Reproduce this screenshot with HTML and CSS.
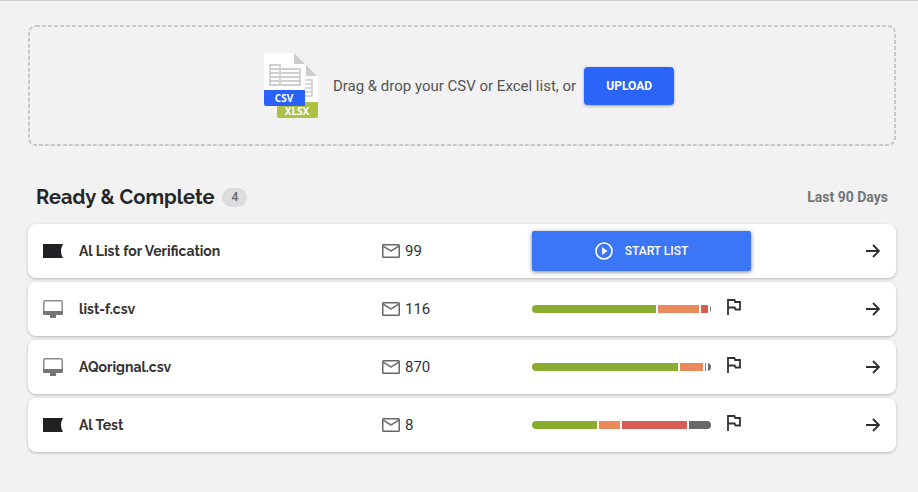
FILE: index.html
```html
<!DOCTYPE html>
<html lang="en">
<head>
<meta charset="UTF-8">
<meta name="viewport" content="width=device-width, initial-scale=1.0">
<title>Lists</title>
<link rel="stylesheet" href="styles.css">
</head>
<body>
<svg width="0" height="0" class="sprite" aria-hidden="true">
<symbol id="banner" viewBox="0 0 20 14"><path d="M0 0h20q-4 7 0 14H0z" fill="#202124"/></symbol>
<symbol id="monitor" viewBox="0 0 20 18">
<rect x="0.75" y="0.75" width="18.5" height="13.5" rx="1.5" fill="#fff" stroke="#8c8c8c" stroke-width="1.5"/>
<path d="M0 11h20v2.500a1.500 1.500 0 0 1-1.500 1.500h-17a1.500 1.500 0 0 1-1.500-1.500zM7 15h6v3H7z" fill="#757575"/>
</symbol>
<symbol id="mail" viewBox="0 0 18 14">
<rect x="0.75" y="0.75" width="16.5" height="12.500" rx="0.8" fill="none" stroke="#666" stroke-width="1.5"/>
<path d="M1 2l8 5 8-5" fill="none" stroke="#777" stroke-width="1.5"/>
</symbol>
<symbol id="flag" viewBox="0 0 14 16"><path d="M1 16V1h6.500l.6 2H13v7.500H8.500l-.8-2H1" fill="none" stroke="#333" stroke-width="1.800"/></symbol>
<symbol id="arrow" viewBox="0 0 14 14"><path d="M0 7h12.500M7 1l6 6-6 6" fill="none" stroke="#303030" stroke-width="1.900"/></symbol>
</svg>

<main class="page">
<section class="dropzone">
<svg class="outline" aria-hidden="true"><rect x="1" y="1" rx="7"/></svg>
<svg class="files" width="54" height="66" viewBox="0 0 54 66" aria-hidden="true">
<path d="M13 12h29l12 12v30H13z" fill="#fff"/>
<path d="M42 12v11h11z" fill="#ccc"/>
<path d="M41 27h7v16h-7M41 31h7M41 35h7M41 39h7" fill="none" stroke="#ccc" stroke-width="1.500"/>
<path d="M2 0h28l11 11v27H0V2a2 2 0 0 1 2-2z" fill="#fff"/>
<path d="M30 0v11h11z" fill="#ccc"/>
<path d="M6 12h10v20H6zM16 16h20v16H16M6 16h10M6 20h30M6 24h30M6 28h30" fill="none" stroke="#cfcfcf" stroke-width="1.800"/>
<path d="M13 49h41v14a2 2 0 0 1-2 2H15a2 2 0 0 1-2-2z" fill="#adc145"/>
<text class="file-type" x="33" y="62" text-anchor="middle">XLSX</text>
<path d="M0 37h41v16H2a2 2 0 0 1-2-2z" fill="#2962f8"/>
<text class="file-type" x="20" y="49" text-anchor="middle">CSV</text>
</svg>
<p class="drop-text">Drag &amp; drop your CSV or Excel list, or</p>
<button class="btn upload-btn">UPLOAD</button>
</section>

<div class="header">
<h1 class="title">Ready &amp; Complete</h1>
<span class="count">4</span>
<span class="period">Last 90 Days</span>
</div>

<ul class="lists">
<li class="list-row">
<svg width="20" height="14"><use href="#banner"/></svg>
<span class="name">Al List for Verification</span>
<span class="emails"><svg width="18" height="14"><use href="#mail"/></svg>99</span>
<div class="status">
<button class="btn start-btn">
<svg width="18" height="18" viewBox="0 0 18 18" aria-hidden="true">
<circle cx="9" cy="9" r="8" fill="none" stroke="#fff" stroke-width="1.600"/>
<path d="M7 5l5.500 4L7 13z" fill="#fff"/>
</svg>
START LIST
</button>
</div>
<a class="open" href="#" aria-label="Open Al List for Verification"><svg width="14" height="14"><use href="#arrow"/></svg></a>
</li>
<li class="list-row">
<svg width="20" height="18"><use href="#monitor"/></svg>
<span class="name">list-f.csv</span>
<span class="emails"><svg width="18" height="14"><use href="#mail"/></svg>116</span>
<div class="status">
<div class="bar">
<span class="good" style="flex-grow: 124"></span>
<span class="risky" style="flex-grow: 41"></span>
<span class="bad" style="flex-grow: 7"></span>
<span class="unknown" style="flex-grow: 1"></span>
</div>
<svg class="flag" width="14" height="16"><use href="#flag"/></svg>
</div>
<a class="open" href="#" aria-label="Open list-f.csv"><svg width="14" height="14"><use href="#arrow"/></svg></a>
</li>
<li class="list-row">
<svg width="20" height="18"><use href="#monitor"/></svg>
<span class="name">AQorignal.csv</span>
<span class="emails"><svg width="18" height="14"><use href="#mail"/></svg>870</span>
<div class="status">
<div class="bar">
<span class="good" style="flex-grow: 146"></span>
<span class="risky" style="flex-grow: 23"></span>
<span class="bad" style="flex-grow: 1"></span>
<span class="unknown" style="flex-grow: 3"></span>
</div>
<svg class="flag" width="14" height="16"><use href="#flag"/></svg>
</div>
<a class="open" href="#" aria-label="Open AQorignal.csv"><svg width="14" height="14"><use href="#arrow"/></svg></a>
</li>
<li class="list-row">
<svg width="20" height="14"><use href="#banner"/></svg>
<span class="name">Al Test</span>
<span class="emails"><svg width="18" height="14"><use href="#mail"/></svg>8</span>
<div class="status">
<div class="bar">
<span class="good" style="flex-grow: 65"></span>
<span class="risky" style="flex-grow: 21"></span>
<span class="bad" style="flex-grow: 65"></span>
<span class="unknown" style="flex-grow: 22"></span>
</div>
<svg class="flag" width="14" height="16"><use href="#flag"/></svg>
</div>
<a class="open" href="#" aria-label="Open Al Test"><svg width="14" height="14"><use href="#arrow"/></svg></a>
</li>
</ul>
</main>
</body>
</html>
```

FILE: styles.css
```css
* {
    box-sizing: border-box;
}

body {
    font-family: Roboto, sans-serif;
    margin: 0;
    background-color: #f2f2f2;
    color: #333;
    border-top: 1px solid #d0d0d0;
}

svg {
    display: block;
    flex-shrink: 0;
}

.sprite {
    position: absolute;
}

.page {
    padding: 24px 22px 24px 28px;
}

.dropzone {
    position: relative;
    display: flex;
    justify-content: center;
    align-items: center;
    height: 121px;
    padding-left: 14px;
}

/* dashed frame, shorter dashes than a CSS border gives */
.outline {
    position: absolute;
    inset: 0;
    width: 100%;
    height: 100%;
    pointer-events: none;
}

.outline rect {
    width: calc(100% - 2px);
    height: calc(100% - 2px);
    fill: none;
    stroke: #c8c8c8;
    stroke-width: 2px;
    stroke-dasharray: 4 2;
}

.files {
    margin-right: 15px;
}

.file-type {
    font-family: "Open Sans", sans-serif;
    font-size: 10px;
    font-weight: bold;
    fill: #fff;
}

.drop-text {
    margin: 0 8px 0 0;
    font-size: 15px;
    color: #555;
}

.btn {
    display: flex;
    justify-content: center;
    align-items: center;
    border: none;
    border-radius: 4px;
    color: white;
    font-family: inherit;
    font-size: 12px;
    font-weight: 500;
    cursor: pointer;
}

.upload-btn {
    width: 90px;
    height: 38px;
    background-color: #2b65f8;
    box-shadow: 0 1px 3px rgba(0, 0, 0, 0.35);
    font-weight: bold;
}

.header {
    display: flex;
    align-items: center;
    padding: 0 8px;
    margin: 37px 0 13px;
}

.title {
    margin: 0;
    font-family: Raleway, Lato, sans-serif;
    font-size: 20px;
    line-height: 28px;
    font-weight: bold;
    color: #262626;
}

.count {
    margin-left: 8px;
    padding: 0 9px;
    border-radius: 10px;
    background-color: #dcdcdc;
    font-size: 12px;
    line-height: 19px;
    font-weight: 500;
    color: #666;
}

.period {
    margin-left: auto;
    font-size: 14px;
    font-weight: bold;
    color: #757575;
}

.lists {
    display: grid;
    gap: 4px;
    margin: 0;
    padding: 0;
    list-style: none;
}

.list-row {
    display: grid;
    grid-template-columns: 36px 303fr 150fr 219fr 129fr;
    align-items: center;
    height: 54px;
    padding: 0 16px 0 15px;
    border-radius: 8px;
    background-color: white;
    box-shadow: 0 1px 3px rgba(0, 0, 0, 0.25);
}

.name {
    font-family: Raleway, Lato, sans-serif;
    font-size: 14px;
    font-weight: bold;
}

.emails {
    display: flex;
    align-items: center;
    gap: 5px;
    font-size: 15px;
}

.status {
    display: flex;
    align-items: center;
}

.start-btn {
    width: 100%;
    height: 40px;
    gap: 12px;
    border-radius: 2px;
    background-color: #3b76f7;
    box-shadow: 0 1px 4px rgba(0, 0, 0, 0.5);
}

.bar {
    display: flex;
    gap: 2px;
    width: 179px;
    height: 8px;
    border-radius: 4px;
    overflow: hidden;
}

.good {
    background-color: #8aad30;
}

.risky {
    background-color: #ea8a5b;
}

.bad {
    background-color: #d95c54;
}

.unknown {
    background-color: #696969;
}

.flag {
    margin: 0 0 4px 16px;
}

.open {
    justify-self: end;
}
```
